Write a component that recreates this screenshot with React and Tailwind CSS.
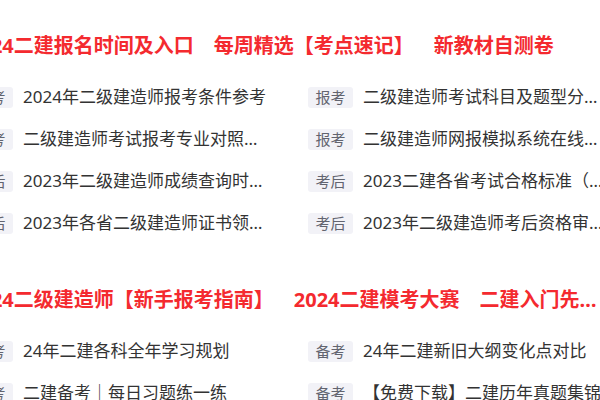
import React from "react";

const blocks = [
  {
    links: ["2024二建报名时间及入口", "每周精选【考点速记】", "新教材自测卷"],
    rows: [
      ["报考", "2024年二级建造师报考条件参考"],
      ["报考", "二级建造师考试科目及题型分析汇总"],
      ["报考", "二级建造师考试报考专业对照表一览"],
      ["报考", "二级建造师网报模拟系统在线体验"],
      ["考后", "2023年二级建造师成绩查询时间及入口"],
      ["考后", "2023二建各省考试合格标准（汇总）"],
      ["考后", "2023年各省二级建造师证书领取时间"],
      ["考后", "2023年二级建造师考后资格审核时间"],
    ],
  },
  {
    links: ["2024二级建造师【新手报考指南】", "2024二建模考大赛", "二建入门先导课程"],
    rows: [
      ["备考", "24年二建各科全年学习规划"],
      ["备考", "24年二建新旧大纲变化点对比"],
      ["备考", "二建备考｜每日习题练一练"],
      ["备考", "【免费下载】二建历年真题集锦"],
    ],
  },
];

const Row = ({ tag, title }) => (
  <div className="flex items-center h-[42px]">
    <span className="shrink-0 w-[45px] h-[21px] leading-[21px] text-center text-[15px] text-[#62646f] bg-[#f2f2f7] rounded-[3px]">
      {tag}
    </span>
    <span className="ml-[10px] w-[246px] truncate text-[17px] text-[#333]">
      {title}
    </span>
  </div>
);

const Block = ({ block }) => (
  <div>
    {/* Red quick links */}
    <div className="flex gap-[20px] h-[28px] items-center text-[20px] font-bold text-[#f42a2f] whitespace-nowrap">
      {block.links.map((link, i) => (
        <a
          key={i}
          className={i === 2 ? "w-[120px] truncate block" : "block"}
        >
          {link}
        </a>
      ))}
    </div>

    {/* Article list */}
    <div className="mt-[16px] grid grid-cols-[300px_300px] gap-x-[40px]">
      {block.rows.map(([tag, title], i) => (
        <Row key={i} tag={tag} title={title} />
      ))}
    </div>
  </div>
);

export default function App() {
  return (
    <div
      className="w-[600px] h-[400px] overflow-hidden bg-white"
      style={{ fontFamily: '"Noto Sans", "Noto Sans CJK SC", sans-serif' }}
    >
      <div className="ml-[-32px] w-[700px] pt-[32px] flex flex-col gap-[42px]">
        {blocks.map((b, i) => (
          <Block key={i} block={b} />
        ))}
      </div>
    </div>
  );
}
